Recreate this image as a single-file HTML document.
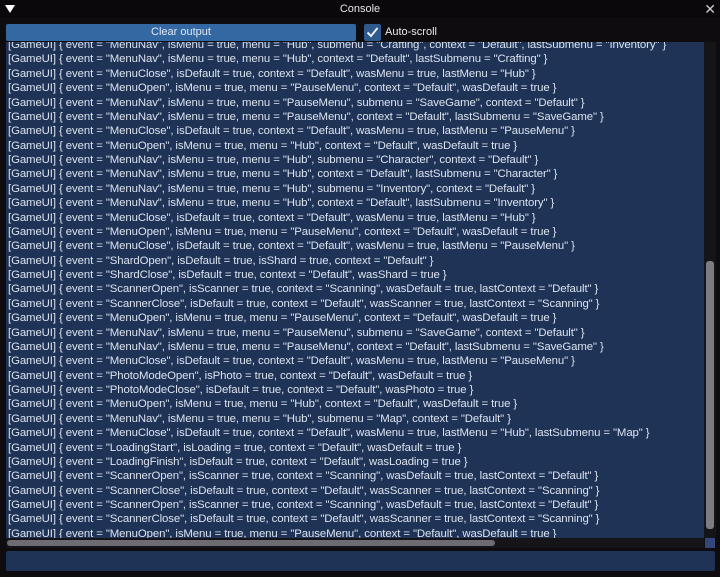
<!DOCTYPE html>
<html><head><meta charset="utf-8"><style>
*{margin:0;padding:0;box-sizing:border-box}
body{width:720px;height:577px;background:#0f0c10;overflow:hidden;font-family:"Liberation Sans",sans-serif;color:#dfe6f0;position:relative}
.title{position:absolute;left:0;top:0;width:720px;height:18px;background:#0a080b;font-size:11px;text-align:center;line-height:18px;color:#e6e6e6}
.tri{position:absolute;left:5px;top:5px;width:0;height:0;border-left:5px solid transparent;border-right:5px solid transparent;border-top:8px solid #fff}
.x{position:absolute;right:4px;top:0;font-size:14px;line-height:18px;color:#ccc}
.btn{position:absolute;left:6px;top:24px;width:350px;height:17px;background:#3468a3;border-radius:2px;font-size:11px;text-align:center;line-height:17px;color:#dfe8f5}
.cb{position:absolute;left:364px;top:24px;width:17px;height:17px;background:#2e5a8e;border-radius:2px}
.cbl{position:absolute;left:385px;top:24px;font-size:11px;line-height:17px;color:#e8e8e8}
.log{position:absolute;left:6px;top:42px;width:698px;height:496px;background:#1f3357;overflow:hidden}
.lines{position:absolute;left:2px;top:-4px;font-size:11.4px;line-height:14.38px;white-space:pre;color:#dbe3ee;letter-spacing:-0.1px}
.vs{position:absolute;left:704px;top:42px;width:12px;height:496px;background:#151419}
.vt{position:absolute;left:706px;top:261px;width:8px;height:268px;background:#7c7c82;border-radius:3px}
.hs{position:absolute;left:6px;top:538px;width:698px;height:10px;background:#151419}
.ht{position:absolute;left:7px;top:540px;width:488px;height:6px;background:#6c6c72;border-radius:3px}
.sq{position:absolute;left:705px;top:538px;width:10px;height:10px;background:#33477a}
.inp{position:absolute;left:6px;top:551px;width:709px;height:20px;background:#1f3357;border-radius:2px}
</style></head><body>
<div class="title"><div class="tri"></div>Console<div class="x">✕</div></div>
<div class="btn">Clear output</div>
<div class="cb"><svg width="17" height="17" viewBox="0 0 17 17"><path d="M3.5 8.5 L7 12 L13.5 4" stroke="#e8eef8" stroke-width="2" fill="none"/></svg></div>
<div class="cbl">Auto-scroll</div>
<div class="log"><div class="lines">[GameUI] { event = "MenuNav", isMenu = true, menu = "Hub", submenu = "Crafting", context = "Default", lastSubmenu = "Inventory" }
[GameUI] { event = "MenuNav", isMenu = true, menu = "Hub", context = "Default", lastSubmenu = "Crafting" }
[GameUI] { event = "MenuClose", isDefault = true, context = "Default", wasMenu = true, lastMenu = "Hub" }
[GameUI] { event = "MenuOpen", isMenu = true, menu = "PauseMenu", context = "Default", wasDefault = true }
[GameUI] { event = "MenuNav", isMenu = true, menu = "PauseMenu", submenu = "SaveGame", context = "Default" }
[GameUI] { event = "MenuNav", isMenu = true, menu = "PauseMenu", context = "Default", lastSubmenu = "SaveGame" }
[GameUI] { event = "MenuClose", isDefault = true, context = "Default", wasMenu = true, lastMenu = "PauseMenu" }
[GameUI] { event = "MenuOpen", isMenu = true, menu = "Hub", context = "Default", wasDefault = true }
[GameUI] { event = "MenuNav", isMenu = true, menu = "Hub", submenu = "Character", context = "Default" }
[GameUI] { event = "MenuNav", isMenu = true, menu = "Hub", context = "Default", lastSubmenu = "Character" }
[GameUI] { event = "MenuNav", isMenu = true, menu = "Hub", submenu = "Inventory", context = "Default" }
[GameUI] { event = "MenuNav", isMenu = true, menu = "Hub", context = "Default", lastSubmenu = "Inventory" }
[GameUI] { event = "MenuClose", isDefault = true, context = "Default", wasMenu = true, lastMenu = "Hub" }
[GameUI] { event = "MenuOpen", isMenu = true, menu = "PauseMenu", context = "Default", wasDefault = true }
[GameUI] { event = "MenuClose", isDefault = true, context = "Default", wasMenu = true, lastMenu = "PauseMenu" }
[GameUI] { event = "ShardOpen", isDefault = true, isShard = true, context = "Default" }
[GameUI] { event = "ShardClose", isDefault = true, context = "Default", wasShard = true }
[GameUI] { event = "ScannerOpen", isScanner = true, context = "Scanning", wasDefault = true, lastContext = "Default" }
[GameUI] { event = "ScannerClose", isDefault = true, context = "Default", wasScanner = true, lastContext = "Scanning" }
[GameUI] { event = "MenuOpen", isMenu = true, menu = "PauseMenu", context = "Default", wasDefault = true }
[GameUI] { event = "MenuNav", isMenu = true, menu = "PauseMenu", submenu = "SaveGame", context = "Default" }
[GameUI] { event = "MenuNav", isMenu = true, menu = "PauseMenu", context = "Default", lastSubmenu = "SaveGame" }
[GameUI] { event = "MenuClose", isDefault = true, context = "Default", wasMenu = true, lastMenu = "PauseMenu" }
[GameUI] { event = "PhotoModeOpen", isPhoto = true, context = "Default", wasDefault = true }
[GameUI] { event = "PhotoModeClose", isDefault = true, context = "Default", wasPhoto = true }
[GameUI] { event = "MenuOpen", isMenu = true, menu = "Hub", context = "Default", wasDefault = true }
[GameUI] { event = "MenuNav", isMenu = true, menu = "Hub", submenu = "Map", context = "Default" }
[GameUI] { event = "MenuClose", isDefault = true, context = "Default", wasMenu = true, lastMenu = "Hub", lastSubmenu = "Map" }
[GameUI] { event = "LoadingStart", isLoading = true, context = "Default", wasDefault = true }
[GameUI] { event = "LoadingFinish", isDefault = true, context = "Default", wasLoading = true }
[GameUI] { event = "ScannerOpen", isScanner = true, context = "Scanning", wasDefault = true, lastContext = "Default" }
[GameUI] { event = "ScannerClose", isDefault = true, context = "Default", wasScanner = true, lastContext = "Scanning" }
[GameUI] { event = "ScannerOpen", isScanner = true, context = "Scanning", wasDefault = true, lastContext = "Default" }
[GameUI] { event = "ScannerClose", isDefault = true, context = "Default", wasScanner = true, lastContext = "Scanning" }
[GameUI] { event = "MenuOpen", isMenu = true, menu = "PauseMenu", context = "Default", wasDefault = true }</div></div>
<div class="vs"></div><div class="vt"></div>
<div class="hs"></div><div class="ht"></div><div class="sq"></div>
<div class="inp"></div>
</body></html>
